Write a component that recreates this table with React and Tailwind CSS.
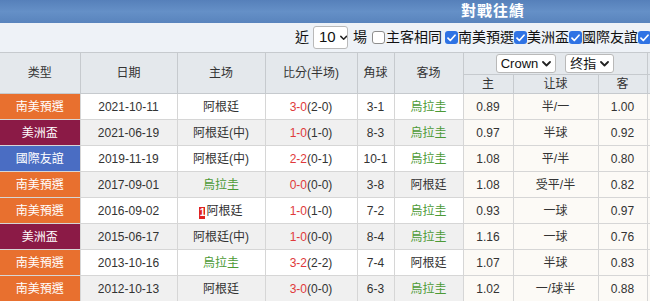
import React from 'react';

const TYPE_BG = {
  '南美預選': 'bg-[#e8702f]',
  '美洲盃': 'bg-[#8b1a46]',
  '國際友誼': 'bg-[#4a6dc3]',
};

const rows = [
  { type: '南美預選', date: '2021-10-11', home: '阿根廷', score: '3-0', half: '(2-0)', corner: '3-1', away: '烏拉圭', h: '0.89', line: '半/一', a: '1.00' },
  { type: '美洲盃', date: '2021-06-19', home: '阿根廷(中)', score: '1-0', half: '(1-0)', corner: '8-3', away: '烏拉圭', h: '0.97', line: '半球', a: '0.92' },
  { type: '國際友誼', date: '2019-11-19', home: '阿根廷(中)', score: '2-2', half: '(0-1)', corner: '10-1', away: '烏拉圭', h: '1.08', line: '平/半', a: '0.80' },
  { type: '南美預選', date: '2017-09-01', home: '烏拉圭', score: '0-0', half: '(0-0)', corner: '3-8', away: '阿根廷', h: '1.08', line: '受平/半', a: '0.82' },
  { type: '南美預選', date: '2016-09-02', home: '阿根廷', red: 1, score: '1-0', half: '(1-0)', corner: '7-2', away: '烏拉圭', h: '0.93', line: '一球', a: '0.97' },
  { type: '美洲盃', date: '2015-06-17', home: '阿根廷(中)', score: '1-0', half: '(0-0)', corner: '8-4', away: '烏拉圭', h: '1.16', line: '一球', a: '0.76' },
  { type: '南美預選', date: '2013-10-16', home: '烏拉圭', score: '3-2', half: '(2-2)', corner: '7-4', away: '阿根廷', h: '1.07', line: '半球', a: '0.83' },
  { type: '南美預選', date: '2012-10-13', home: '阿根廷', score: '3-0', half: '(0-0)', corner: '6-3', away: '烏拉圭', h: '1.02', line: '一/球半', a: '0.88' },
];

const teamColor = (t) => (t.startsWith('烏拉圭') ? 'text-[#4c9a36]' : 'text-[#333]');

const Chevron = () => (
  <svg width="9" height="6" viewBox="0 0 9 6" className="ml-[4px]">
    <path d="M1 1l3.5 3.5L8 1" fill="none" stroke="#222" strokeWidth="1.8" strokeLinecap="round" strokeLinejoin="round" />
  </svg>
);

const FakeSelect = ({ label, className }) => (
  <span className={`inline-flex items-center bg-white border border-[#b9b9b9] rounded-[3px] text-[#111] ${className}`}>
    {label}
    <Chevron />
  </span>
);

const Check = ({ on }) =>
  on ? (
    <span className="inline-flex shrink-0 items-center justify-center w-[13px] h-[13px] rounded-[3px] bg-[#2f73e4]">
      <svg width="9" height="8" viewBox="0 0 9 8">
        <path d="M1 4.2l2.3 2.3L8 1.2" fill="none" stroke="#fff" strokeWidth="1.7" strokeLinecap="round" strokeLinejoin="round" />
      </svg>
    </span>
  ) : (
    <span className="inline-block shrink-0 w-[13px] h-[13px] rounded-[3px] bg-white border border-[#8e8e8e]" />
  );

const th = 'border border-[#c6cace] font-normal text-[12px] text-[#333] text-center';
const td = 'border border-[#d6d6d6] text-center h-[26px] p-0';
const odd = `${td} bg-[#fcfaf6]`;

export default function App() {
  return (
    <div className="w-[650px] h-[301px] overflow-hidden bg-white" style={{ fontFamily: '"Liberation Sans", "Noto Sans CJK TC", sans-serif' }}>
      <div className="w-[986px]">
        <div className="h-[23px] flex items-center justify-center bg-gradient-to-b from-[#5680ba] via-[#6590c7] to-[#5984bd] text-white font-bold text-[15px] tracking-[1px]">
          對戰往績
        </div>
        <div className="h-[29px] flex items-center justify-center bg-[#eef2f7] text-[14px] text-[#111]">
          <span className="mr-[4px]">近</span>
          <FakeSelect label="10" className="h-[23px] w-[35px] pl-[5px] text-[15px]" />
          <span className="ml-[5px] mr-[5px]">場</span>
          <Check on={false} />
          <span className="ml-[1px] mr-[3px]">主客相同</span>
          <Check on />
          <span>南美預選</span>
          <Check on />
          <span>美洲盃</span>
          <Check on />
          <span>國際友誼</span>
          <Check on />
          <span className="w-[40px]" />
        </div>
        <table className="border-collapse table-fixed w-[986px]">
          <colgroup>
            <col className="w-[80px]" />
            <col className="w-[97px]" />
            <col className="w-[88px]" />
            <col className="w-[92px]" />
            <col className="w-[37px]" />
            <col className="w-[69px]" />
            <col className="w-[50px]" />
            <col className="w-[85px]" />
            <col className="w-[49px]" />
            <col className="w-[50px]" />
            <col className="w-[85px]" />
            <col className="w-[49px]" />
            <col className="w-[52px]" />
            <col className="w-[52px]" />
            <col className="w-[51px]" />
          </colgroup>
          <thead className="bg-[#e4e8ec]">
            <tr className="h-[22px]">
              <th rowSpan={2} className={`${th} border-l-0`}>类型</th>
              <th rowSpan={2} className={th}>日期</th>
              <th rowSpan={2} className={th}>主场</th>
              <th rowSpan={2} className={th}>比分(半场)</th>
              <th rowSpan={2} className={th}>角球</th>
              <th rowSpan={2} className={th}>客场</th>
              <th colSpan={3} className={`${th} p-0`}>
                <div className="flex items-center justify-center gap-[9px] text-[13px]">
                  <FakeSelect label="Crown" className="h-[19px] px-[4px]" />
                  <FakeSelect label="终指" className="h-[19px] px-[4px]" />
                </div>
              </th>
              <th colSpan={3} className={th} />
              <th colSpan={3} className={th} />
            </tr>
            <tr className="h-[18px]">
              <th className={th}>主</th>
              <th className={th}>让球</th>
              <th className={th}>客</th>
              <th className={th} />
              <th className={th} />
              <th className={th} />
              <th className={th} />
              <th className={th} />
              <th className={th} />
            </tr>
          </thead>
          <tbody className="text-[12px] text-[#333]">
            {rows.map((r, i) => (
              <tr key={i} className={i % 2 ? 'bg-[#f0f0f0]' : 'bg-white'}>
                <td className={`${td} border-l-0 text-white ${TYPE_BG[r.type]}`}>{r.type}</td>
                <td className={td}>{r.date}</td>
                <td className={`${td} ${teamColor(r.home)}`}>
                  {r.red ? (
                    <span className="inline-flex items-center justify-center w-[6px] h-[12px] bg-[#e0231f] text-white text-[10px] font-bold leading-none align-[-1px] mr-[1px]">
                      {r.red}
                    </span>
                  ) : null}
                  {r.home}
                </td>
                <td className={td}>
                  <span className="text-[#e0393b]">{r.score}</span>
                  {r.half}
                </td>
                <td className={td}>{r.corner}</td>
                <td className={`${td} ${teamColor(r.away)}`}>{r.away}</td>
                <td className={odd}>{r.h}</td>
                <td className={odd}>{r.line}</td>
                <td className={odd}>{r.a}</td>
                <td className={odd} />
                <td className={odd} />
                <td className={odd} />
                <td className={td} />
                <td className={td} />
                <td className={td} />
              </tr>
            ))}
          </tbody>
        </table>
      </div>
    </div>
  );
}
